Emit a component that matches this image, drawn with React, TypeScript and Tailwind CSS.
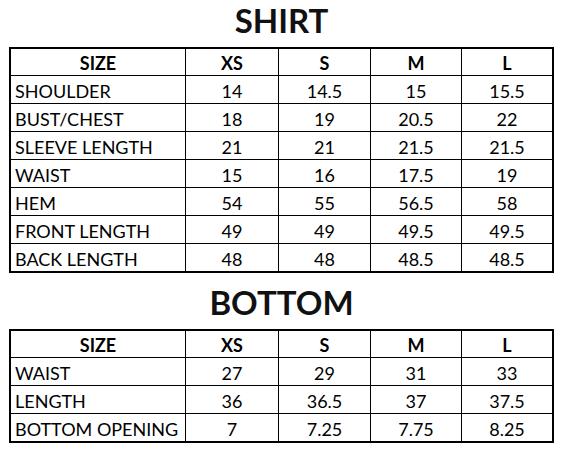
const SHIRT = {
  title: "SHIRT",
  rows: [
    ["SHOULDER", "14", "14.5", "15", "15.5"],
    ["BUST/CHEST", "18", "19", "20.5", "22"],
    ["SLEEVE LENGTH", "21", "21", "21.5", "21.5"],
    ["WAIST", "15", "16", "17.5", "19"],
    ["HEM", "54", "55", "56.5", "58"],
    ["FRONT LENGTH", "49", "49", "49.5", "49.5"],
    ["BACK LENGTH", "48", "48", "48.5", "48.5"],
  ],
};

const BOTTOM = {
  title: "BOTTOM",
  rows: [
    ["WAIST", "27", "29", "31", "33"],
    ["LENGTH", "36", "36.5", "37", "37.5"],
    ["BOTTOM OPENING", "7", "7.25", "7.75", "8.25"],
  ],
};

const HEAD = ["SIZE", "XS", "S", "M", "L"];

const SizeTable = ({ title, rows }: { title: string; rows: string[][] }) => (
  <section className="w-[545px]">
    <h1 className="h-[47px] flex items-start justify-center pt-[1px] text-[33px] leading-[38px] font-bold text-[#111]">
      {title}
    </h1>
    <div className="border-2 border-black grid grid-cols-[174px_93px_92px_91px_91px]">
      {HEAD.map((h, i) => (
        <div
          key={h}
          className={`h-[26px] pt-[1px] flex items-center justify-center font-bold text-[18px] leading-none ${i > 0 ? "border-l border-black" : ""}`}
        >
          {h}
        </div>
      ))}
      {rows.map((row) =>
        row.map((cell, i) => (
          <div
            key={row[0] + i}
            className={`h-[28px] pt-[2px] border-t border-black flex items-center text-[18px] leading-none ${
              i > 0 ? "border-l justify-center" : "pl-[4px]"
            }`}
          >
            {cell}
          </div>
        ))
      )}
    </div>
  </section>
);

export default function App() {
  return (
    <div className="w-[566px] h-[459px] bg-white text-black font-['Lato',_sans-serif] pl-[9px]">
      <SizeTable {...SHIRT} />
      <div className="h-[9px]" />
      <SizeTable {...BOTTOM} />
    </div>
  );
}
